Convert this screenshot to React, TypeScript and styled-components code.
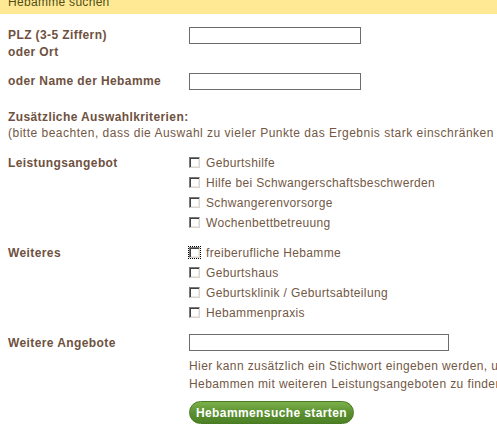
import React from "react"
import styled, { createGlobalStyle } from "styled-components"

const brown = "#735845"
const labelBrown = "#6e5140"

const GlobalStyle = createGlobalStyle`
  html, body {
    margin: 0;
    padding: 0;
    background: #fff;
    overflow: hidden;
  }
  body {
    font-family: "Liberation Sans", Arial, sans-serif;
    font-size: 12px;
    color: ${brown};
  }
`

const Page = styled.div`
  width: 620px;
`

const Header = styled.div`
  height: 14px;
  overflow: hidden;
  background: #ffe995;
  padding-left: 8px;
`

const HeaderTitle = styled.span`
  display: block;
  margin-top: -5px;
  line-height: 14px;
  font-size: 12px;
  color: #4f4f16;
  letter-spacing: 0.3px;
`

const Form = styled.div`
  display: grid;
  grid-template-columns: 181px 1fr;
  padding: 0 0 0 8px;
`

const Label = styled.div<{ $top?: number }>`
  font-weight: bold;
  color: ${labelBrown};
  letter-spacing: 0.4px;
  line-height: 17px;
  padding-top: ${(p) => p.$top ?? 0}px;
`

const Field = styled.div<{ $top?: number }>`
  padding-top: ${(p) => p.$top ?? 0}px;
`

const TextInput = styled.input<{ $width: number }>`
  display: block;
  box-sizing: border-box;
  width: ${(p) => p.$width}px;
  height: 17px;
  margin: 0;
  border: 1px solid #6c6c6c;
  padding: 0 2px;
  font-family: inherit;
  font-size: 12px;
  background: #fff;
`

const Section = styled.div`
  grid-column: 1 / -1;
  padding-top: 19px;
  white-space: nowrap;
`

const SectionTitle = styled.div`
  font-weight: bold;
  color: ${labelBrown};
  letter-spacing: 0.4px;
  line-height: 16px;
`

const Note = styled.div`
  line-height: 16px;
  letter-spacing: 0.5px;
`

const CheckList = styled.div`
  display: flex;
  flex-direction: column;
`

const CheckRow = styled.label`
  display: flex;
  align-items: center;
  height: 20px;
  letter-spacing: 0.35px;
  white-space: nowrap;
`

const Box = styled.span<{ $focused?: boolean }>`
  box-sizing: border-box;
  width: 11px;
  height: 11px;
  margin-right: 6px;
  margin-top: -1px;
  background: #fff;
  border-top: 1px solid #7a7a7a;
  border-left: 1px solid #7a7a7a;
  border-right: 1px solid #d8d6cf;
  border-bottom: 1px solid #d8d6cf;
  box-shadow: inset 1px 1px 0 #404040, inset -1px -1px 0 #ece9e2;
  outline: ${(p) => (p.$focused ? "1px dotted #000" : "none")};
  outline-offset: 0px;
`

const Help = styled.div`
  padding-top: 6px;
  line-height: 18px;
  letter-spacing: 0.4px;
  white-space: nowrap;
`

const SubmitButton = styled.button`
  display: block;
  margin-top: 8px;
  width: 165px;
  height: 23px;
  border-radius: 12px;
  border: 1px solid #4a7a22;
  background: linear-gradient(#7cb04a, #5b9131 50%, #4c8025);
  color: #fff;
  font-family: "Liberation Sans", Arial, sans-serif;
  font-weight: bold;
  font-size: 12px;
  letter-spacing: 0.4px;
  padding: 0;
  cursor: pointer;
`

const Check = ({ text, focused }: { text: string; focused?: boolean }) => (
  <CheckRow>
    <Box $focused={focused} />
    {text}
  </CheckRow>
)

const App = () => (
  <Page>
    <GlobalStyle />
    <Header>
      <HeaderTitle>Hebamme suchen</HeaderTitle>
    </Header>
    <Form>
      <Label $top={13}>
        PLZ (3-5 Ziffern)
        <br />
        oder Ort
      </Label>
      <Field $top={13}>
        <TextInput $width={172} />
      </Field>

      <Label $top={12}>oder Name der Hebamme</Label>
      <Field $top={12}>
        <TextInput $width={172} />
      </Field>

      <Section>
        <SectionTitle>Zusätzliche Auswahlkriterien:</SectionTitle>
        <Note>
          (bitte beachten, dass die Auswahl zu vieler Punkte das Ergebnis stark
          einschränken kann)
        </Note>
      </Section>

      <Label $top={14}>Leistungsangebot</Label>
      <Field $top={12}>
        <CheckList>
          <Check text="Geburtshilfe" />
          <Check text="Hilfe bei Schwangerschaftsbeschwerden" />
          <Check text="Schwangerenvorsorge" />
          <Check text="Wochenbettbetreuung" />
        </CheckList>
      </Field>

      <Label $top={12}>Weiteres</Label>
      <Field $top={10}>
        <CheckList>
          <Check text="freiberufliche Hebamme" focused />
          <Check text="Geburtshaus" />
          <Check text="Geburtsklinik / Geburtsabteilung" />
          <Check text="Hebammenpraxis" />
        </CheckList>
      </Field>

      <Label $top={12}>Weitere Angebote</Label>
      <Field $top={11}>
        <TextInput $width={260} />
        <Help>
          Hier kann zusätzlich ein Stichwort eingeben werden, um
          <br />
          Hebammen mit weiteren Leistungsangeboten zu finden.
        </Help>
        <SubmitButton>Hebammensuche starten</SubmitButton>
      </Field>
    </Form>
  </Page>
)

export default App
